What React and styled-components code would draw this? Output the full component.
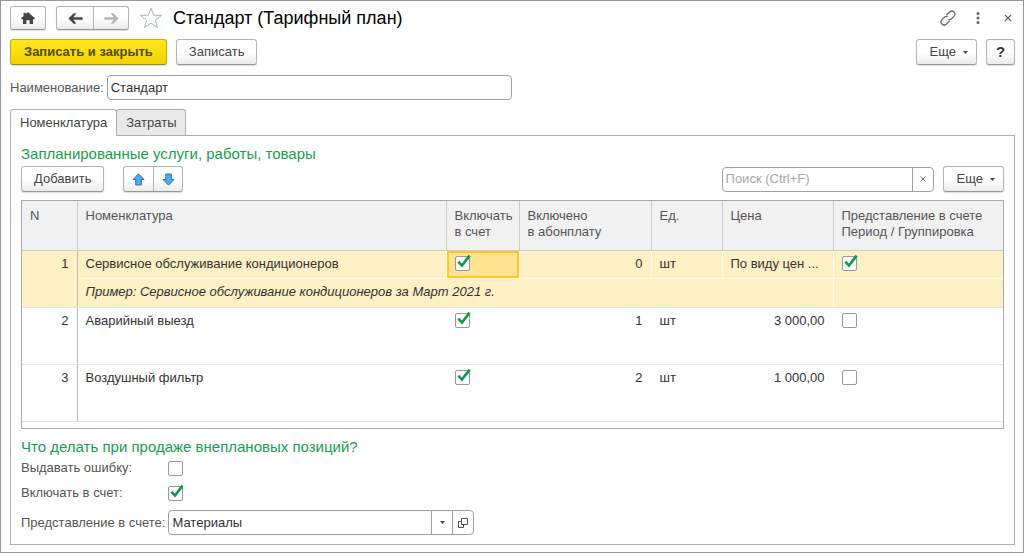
import React, { useState } from "react";
import styled, { createGlobalStyle, css } from "styled-components";

const GlobalStyle = createGlobalStyle`
  * {
    box-sizing: border-box;
  }

  body {
    margin: 0;
    background: #fff;
    color: #333;
    font-family: "Liberation Sans", Arial, sans-serif;
    font-size: 13px;
    line-height: 16px;
  }

  button,
  input,
  select {
    font: inherit;
    color: inherit;
    margin: 0;
  }
`;

const Window = styled.main`
  display: flex;
  flex-direction: column;
  min-height: 100vh;
  padding: 5px 8px 7px 9px;
  border: 1px solid #999;
`;

const TitleBar = styled.header`
  display: flex;
  align-items: center;
  gap: 10px;
  height: 24px;
`;

const Title = styled.h1`
  flex: 1;
  margin: 0;
  color: #000;
  font-size: 18px;
  font-weight: normal;
  line-height: 24px;
`;

const buttonFace = css`
  border: 1px solid #b4b4b4;
  border-bottom-color: #999;
  border-radius: 3px;
  background: linear-gradient(#fff 50%, #ebebeb);
  box-shadow: 0 1px 1px #ddd;
`;

const Button = styled.button`
  ${buttonFace}
  display: flex;
  align-items: center;
  justify-content: center;
  height: 26px;
  padding: 0 12px;
  color: #444;
  white-space: nowrap;

  ${(props) =>
    props.$primary &&
    css`
      padding: 0 13px;
      border-color: #c9ac00;
      border-bottom-color: #a38c00;
      background: linear-gradient(#ffe81f, #f3d200);
      color: #54490a;
      font-weight: bold;
    `}
`;

const MenuButton = styled(Button)`
  gap: 7px;
  padding: 0 8px 0 13px;
`;

const HelpButton = styled(Button)`
  width: 29px;
  padding: 0;
  color: #333;
  font-size: 15px;
  font-weight: bold;
`;

const ButtonGroup = styled.div`
  ${buttonFace}
  display: flex;
  height: 24px;
`;

const MoveGroup = styled(ButtonGroup)`
  height: 26px;
  margin-left: 10px;
`;

const GroupButton = styled.button`
  display: flex;
  align-items: center;
  justify-content: center;
  width: ${(props) => props.$width}px;
  padding: 0;
  border: none;
  background: none;

  & + & {
    border-left: 1px solid ${(props) => props.$divider || "#b4b4b4"};
  }
`;

const IconButton = styled.button`
  display: flex;
  align-items: center;
  justify-content: center;
  width: 24px;
  height: 24px;
  padding: 0;
  border: none;
  background: none;
`;

const WindowActions = styled.div`
  display: flex;
  gap: 6px;
  margin-right: -5px;
`;

const CommandBar = styled.div`
  display: flex;
  align-items: center;
  gap: 9px;
  margin-top: ${(props) => props.$top}px;
`;

const Spacer = styled.div`
  flex: 1;
`;

const NameRow = styled.div`
  display: flex;
  align-items: center;
  gap: 3px;
  margin-top: 10px;
  color: #555;
`;

const TextInput = styled.input`
  flex: 0 1 405px;
  min-width: 0;
  height: 25px;
  padding: 0 3px;
  border: 1px solid #a0a0a0;
  border-radius: 4px;
  background: #fff;
  color: #333;
`;

const Tabs = styled.div`
  display: flex;
  margin-top: 9px;
`;

const Tab = styled.button`
  height: 27px;
  padding: 0 9px;
  border: 1px solid #b0b0b0;
  border-bottom: none;
  border-radius: 3px 3px 0 0;
  background: #fff;
  color: #444;
  z-index: 1;

  & + & {
    margin-left: -1px;
  }

  ${(props) =>
    !props.$active &&
    css`
      height: 26px;
      background: #e9e9e9;
      z-index: 0;
    `}
`;

const Panel = styled.section`
  flex: 1;
  margin-top: -1px;
  padding: 9px 10px 4px;
  border: 1px solid #b0b0b0;
`;

const Heading = styled.h2`
  margin: 0;
  color: #17a04d;
  font-size: 15px;
  font-weight: normal;
  line-height: 18px;
`;

const FieldBox = styled.div`
  display: flex;
  flex: 0 1 ${(props) => props.$width}px;
  min-width: 0;
  height: 25px;
  border: 1px solid #a0a0a0;
  border-radius: 4px;
  background: #fff;
  color: #333;

  input,
  select {
    flex: 1;
    min-width: 0;
    padding: 0 3px;
    border: none;
    outline: none;
    background: none;
    appearance: none;
  }

  input::placeholder {
    color: #a6a6a6;
    opacity: 1;
  }
`;

const FieldButton = styled.button`
  display: flex;
  align-items: center;
  justify-content: center;
  width: 21px;
  padding: 0;
  border: none;
  border-left: 1px solid #a0a0a0;
  background: none;
`;

const TableFrame = styled.div`
  margin: 8px 0 9px;
  padding-bottom: 6px;
  border: 1px solid #aaa;
`;

const Table = styled.table`
  width: 100%;
  table-layout: fixed;
  border-collapse: collapse;
`;

const HeadCell = styled.th`
  height: 49px;
  padding: 7px 8px;
  border-left: 1px solid #ccc;
  border-bottom: 1px solid #ccc;
  background: #f1f1f1;
  color: #555;
  font-weight: normal;
  text-align: left;
  vertical-align: top;
  white-space: nowrap;

  &:first-child {
    border-left: none;
  }
`;

const Row = styled.tr`
  height: ${(props) => (props.$selected ? 28 : 57)}px;
  background: ${(props) => (props.$selected ? "#fdf0c4" : "#fff")};
`;

const Cell = styled.td`
  padding: 5px 8px;
  border-left: 1px solid #fff;
  border-bottom: 1px solid #e4e4e4;
  text-align: ${(props) => props.$align || "left"};
  vertical-align: top;
  white-space: nowrap;

  ${(props) =>
    props.$selected &&
    css`
      border-left-color: #fff9e6;
      border-bottom-color: #fff9e6;
    `}

  ${(props) =>
    props.$active &&
    css`
      background: #fee391;
      box-shadow: inset 0 0 0 2px #fdc52c;
    `}

  ${(props) =>
    props.$number &&
    css`
      border-left: none;
      border-right: 1px solid #bbb;
      border-bottom-color: #e4e4e4;
    `}
`;

const NoteRow = styled(Row)`
  height: 29px;

  td {
    border-bottom-color: #e4e4e4;
    font-style: italic;
  }
`;

const CheckWrap = styled.span`
  display: block;
  position: relative;
  width: 15px;
  height: 15px;

  input {
    display: block;
    width: 15px;
    height: 15px;
    appearance: none;
    border: 1px solid #999;
    border-radius: 2px;
    background: #fff;
  }

  svg {
    position: absolute;
    left: 0;
    top: -2px;
    pointer-events: none;
  }
`;

const Options = styled.div`
  display: grid;
  grid-template-columns: auto 1fr;
  grid-template-rows: 25px 25px 34px;
  align-items: center;
  column-gap: 3px;
  color: #555;
`;

const SelectLine = styled.div`
  display: flex;
`;

const Checkbox = ({ id, label, initial }) => {
  const [checked, setChecked] = useState(initial);

  return (
    <CheckWrap>
      <input
        id={id}
        type="checkbox"
        aria-label={label}
        checked={checked}
        onChange={(e) => setChecked(e.target.checked)}
      />
      {checked && (
        <svg width="17" height="17" viewBox="0 0 17 17">
          <path
            d="M3.3 7.6 7 11.6 14.6 1.6"
            fill="none"
            stroke="#0b9a4a"
            strokeWidth="2.6"
          />
        </svg>
      )}
    </CheckWrap>
  );
};

const Caret = () => (
  <svg width="5" height="3" viewBox="0 0 5 3">
    <path d="M0 0H5L2.5 3Z" fill="#444" />
  </svg>
);

const HomeIcon = () => (
  <svg width="16" height="14" viewBox="0 0 16 14">
    <path
      d="M8 1 15 7.2 14 8.6 13 7.8V13H9.6V9.2H6.4V13H3V7.8L2 8.6 1 7.2 3.5 5V1.8H5.8V3Z"
      fill="#444"
    />
  </svg>
);

const ArrowIcon = ({ color, flip }) => (
  <svg width="15" height="11" viewBox="0 0 15 11">
    <path
      d={
        flip
          ? "M14.3 5.5 9.3.6H7.2L10 4.4H.7V6.6H10L7.2 10.4H9.3Z"
          : "M.7 5.5 5.7.6H7.8L5 4.4H14.3V6.6H5L7.8 10.4H5.7Z"
      }
      fill={color}
      stroke={color}
      strokeWidth=".5"
    />
  </svg>
);

const StarIcon = () => (
  <svg width="24" height="24" viewBox="0 0 24 24">
    <path
      d="M12 2 14.7 9.2 22.5 9.4 16.3 14.2 18.6 21.6 12 17.2 5.4 21.6 7.7 14.2 1.5 9.4 9.3 9.2Z"
      fill="#fff"
      stroke="#a9b4bd"
    />
  </svg>
);

const LinkIcon = () => (
  <svg width="18" height="18" viewBox="0 0 18 18" fill="none" stroke="#666" strokeWidth="1.2">
    <path d="M7.3 6.2 10.6 3Q12.8 1 15 3T15 7.4L12.2 10Q10.8 11.1 9.4 10.3" />
    <path d="M10.7 11.8 7.4 15Q5.2 17 3 15T3 10.6L5.8 8Q7.2 6.9 8.6 7.7" />
  </svg>
);

const MoreIcon = () => (
  <svg width="4" height="12" viewBox="0 0 4 12" fill="#666">
    <circle cx="2" cy="1.6" r="1.5" />
    <circle cx="2" cy="6" r="1.5" />
    <circle cx="2" cy="10.4" r="1.5" />
  </svg>
);

const CrossIcon = ({ size }) => (
  <svg width={size} height={size} viewBox="0 0 8 8">
    <path d="M.8.8 7.2 7.2M7.2.8.8 7.2" stroke="#555" strokeWidth="1.2" />
  </svg>
);

const MoveIcon = ({ down }) => (
  <svg width="13" height="13" viewBox="0 0 13 13">
    <path
      d={
        down
          ? "M6.5 12.2 12 6.5H9.3V1H3.7V6.5H1Z"
          : "M6.5 .8 12 6.5H9.3V12H3.7V6.5H1Z"
      }
      fill="#4cabe8"
      stroke="#2b78ad"
    />
  </svg>
);

const OpenIcon = () => (
  <svg width="10" height="10" viewBox="0 0 10 10" fill="none" stroke="#555">
    <path d="M3.5.5H9.5V6.5H3.5ZM3.5 3.5H.5V9.5H5.5V6.5" />
  </svg>
);

const columns = [
  { title: "N", width: 55 },
  { title: "Номенклатура" },
  { title: "Включать", second: "в счет", width: 73 },
  { title: "Включено", second: "в абонплату", width: 132 },
  { title: "Ед.", width: 71 },
  { title: "Цена", width: 111 },
  { title: "Представление в счете", second: "Период / Группировка", width: 170 },
];

const items = [
  {
    name: "Сервисное обслуживание кондиционеров",
    note: "Пример: Сервисное обслуживание кондиционеров за Март 2021 г.",
    included: 0,
    unit: "шт",
    price: "По виду цен ...",
    grouped: true,
    selected: true,
  },
  { name: "Аварийный выезд", included: 1, unit: "шт", price: "3 000,00" },
  { name: "Воздушный фильтр", included: 2, unit: "шт", price: "1 000,00" },
];

const ItemRows = ({ item, number }) => {
  const selected = item.selected;

  return (
    <>
      <Row $selected={selected}>
        <Cell $number $align="right" $selected={selected} rowSpan={selected ? 2 : 1}>
          {number}
        </Cell>
        <Cell $selected={selected}>{item.name}</Cell>
        <Cell $selected={selected} $active={selected}>
          <Checkbox label="Включать в счет" initial />
        </Cell>
        <Cell $selected={selected} $align="right">
          {item.included}
        </Cell>
        <Cell $selected={selected}>{item.unit}</Cell>
        <Cell $selected={selected} $align={selected ? "left" : "right"}>
          {item.price}
        </Cell>
        <Cell $selected={selected}>
          <Checkbox label="Представление в счете" initial={!!item.grouped} />
        </Cell>
      </Row>
      {item.note && (
        <NoteRow $selected>
          <Cell $selected colSpan={5}>
            {item.note}
          </Cell>
          <Cell $selected />
        </NoteRow>
      )}
    </>
  );
};

const App = () => {
  const [name, setName] = useState("Стандарт");
  const [search, setSearch] = useState("");
  const [tab, setTab] = useState("items");

  return (
    <Window>
      <GlobalStyle />
      <TitleBar>
        <ButtonGroup>
          <GroupButton $width={34} aria-label="Начальная страница">
            <HomeIcon />
          </GroupButton>
        </ButtonGroup>
        <ButtonGroup>
          <GroupButton $width={36} aria-label="Назад">
            <ArrowIcon color="#444" />
          </GroupButton>
          <GroupButton $width={35} $divider="#ddd" aria-label="Вперед">
            <ArrowIcon color="#b5b5b5" flip />
          </GroupButton>
        </ButtonGroup>
        <IconButton aria-label="Избранное">
          <StarIcon />
        </IconButton>
        <Title>Стандарт (Тарифный план)</Title>
        <WindowActions>
          <IconButton aria-label="Получить ссылку">
            <LinkIcon />
          </IconButton>
          <IconButton aria-label="Действия">
            <MoreIcon />
          </IconButton>
          <IconButton aria-label="Закрыть">
            <CrossIcon size={8} />
          </IconButton>
        </WindowActions>
      </TitleBar>

      <CommandBar $top={9}>
        <Button $primary>Записать и закрыть</Button>
        <Button>Записать</Button>
        <Spacer />
        <MenuButton>
          Еще <Caret />
        </MenuButton>
        <HelpButton>?</HelpButton>
      </CommandBar>

      <NameRow>
        <label htmlFor="name">Наименование:</label>
        <TextInput id="name" value={name} onChange={(e) => setName(e.target.value)} />
      </NameRow>

      <Tabs role="tablist">
        <Tab role="tab" $active={tab === "items"} onClick={() => setTab("items")}>
          Номенклатура
        </Tab>
        <Tab role="tab" $active={tab === "costs"} onClick={() => setTab("costs")}>
          Затраты
        </Tab>
      </Tabs>

      <Panel>
        <Heading>Запланированные услуги, работы, товары</Heading>
        <CommandBar $top={3}>
          <Button>Добавить</Button>
          <MoveGroup>
            <GroupButton $width={29} aria-label="Переместить вверх">
              <MoveIcon />
            </GroupButton>
            <GroupButton $width={29} aria-label="Переместить вниз">
              <MoveIcon down />
            </GroupButton>
          </MoveGroup>
          <Spacer />
          <FieldBox $width={212}>
            <input
              aria-label="Поиск"
              placeholder="Поиск (Ctrl+F)"
              value={search}
              onChange={(e) => setSearch(e.target.value)}
            />
            <FieldButton aria-label="Очистить" onClick={() => setSearch("")}>
              <CrossIcon size={6} />
            </FieldButton>
          </FieldBox>
          <MenuButton>
            Еще <Caret />
          </MenuButton>
        </CommandBar>

        <TableFrame>
          <Table>
            <colgroup>
              {columns.map((column) => (
                <col key={column.title} width={column.width} />
              ))}
            </colgroup>
            <thead>
              <tr>
                {columns.map((column) => (
                  <HeadCell key={column.title}>
                    {column.title}
                    {column.second && <br />}
                    {column.second}
                  </HeadCell>
                ))}
              </tr>
            </thead>
            <tbody>
              {items.map((item, i) => (
                <ItemRows key={item.name} item={item} number={i + 1} />
              ))}
            </tbody>
          </Table>
        </TableFrame>

        <Heading>Что делать при продаже внеплановых позиций?</Heading>
        <Options>
          <label htmlFor="showError">Выдавать ошибку:</label>
          <Checkbox id="showError" initial={false} />
          <label htmlFor="addToBill">Включать в счет:</label>
          <Checkbox id="addToBill" initial />
          <label htmlFor="billView">Представление в счете:</label>
          <SelectLine>
            <FieldBox $width={306}>
              <select id="billView" defaultValue="Материалы">
                <option>Материалы</option>
              </select>
              <FieldButton
                aria-label="Выбрать"
                onClick={() => document.getElementById("billView").showPicker()}
              >
                <Caret />
              </FieldButton>
              <FieldButton aria-label="Открыть">
                <OpenIcon />
              </FieldButton>
            </FieldBox>
          </SelectLine>
        </Options>
      </Panel>
    </Window>
  );
};

export default App;
